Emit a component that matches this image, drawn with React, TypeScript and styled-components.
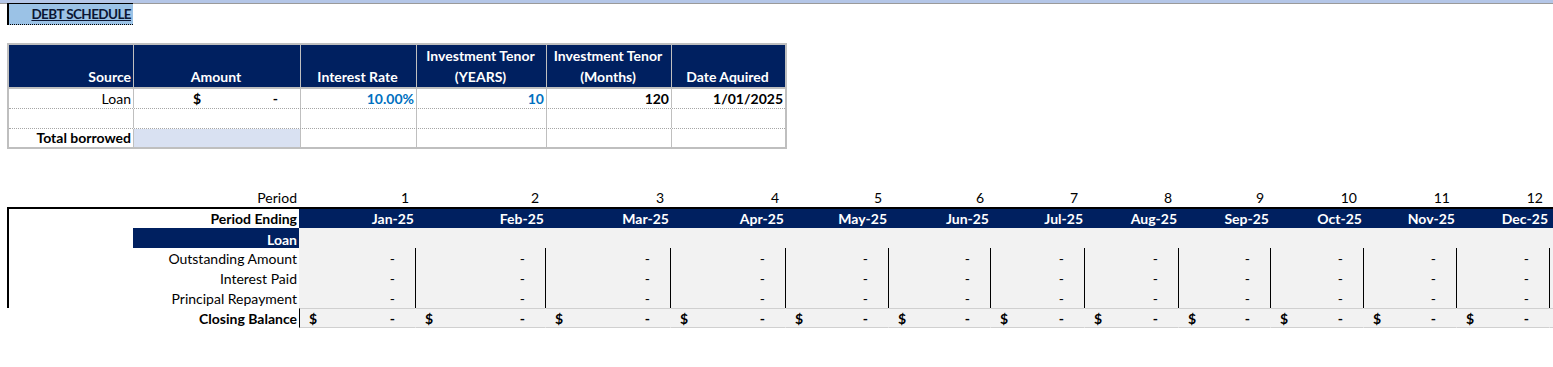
import React from 'react';
import styled, { createGlobalStyle, css } from 'styled-components';

const NAVY = '#002060';
const GRID_GRAY = '#bfbfbf';
const FILL_GRAY = '#f2f2f2';
const BLUE_TEXT = '#0070c0';

const GlobalStyle = createGlobalStyle`
  html, body { margin: 0; padding: 0; background: #ffffff; }
  body {
    font-family: Lato, "Open Sans", Arial, sans-serif;
    font-size: 14px;
    color: #000000;
  }
  * { box-sizing: border-box; }
`;

const Sheet = styled.div`
  width: 1553px;
  height: 367px;
  overflow: hidden;
  background: #ffffff;
`;

const TopBar = styled.div`
  height: 4px;
  background: #b4c6e7;
  border-bottom: 1px solid #9a9a9a;
`;

const TitleCell = styled.div`
  margin: -1px 0 0 7px;
  width: 126px;
  height: 22px;
  background: #9bc2e6;
  border-left: 2px solid #000;
  border-top: 1px solid #000;
  border-bottom: 1px dotted #000;
  display: flex;
  justify-content: flex-end;
  align-items: flex-end;
  padding: 0 2px 1px 0;
  line-height: 18px;
  font-size: 13.5px;
  letter-spacing: -0.6px;
  font-weight: 700;
  text-decoration: underline;
  color: #0b1633;
`;

/* ---------- Debt source table ---------- */

const SOURCE_COLS = '125px 167px 116px 130px 125px 113px';

const SourceTable = styled.div`
  margin: 18px 0 0 7px;
  width: 780px;
  border: 2px solid ${GRID_GRAY};
`;

const HeadRow = styled.div`
  display: grid;
  grid-template-columns: ${SOURCE_COLS};
  height: 44px;
  background: ${NAVY};
  border-bottom: 2px solid ${GRID_GRAY};
`;

const HeadCell = styled.div<{ $align: 'right' | 'center' }>`
  display: flex;
  flex-direction: column;
  justify-content: flex-end;
  align-items: ${(p) => (p.$align === 'right' ? 'flex-end' : 'center')};
  padding: 0 2px 1px 0;
  color: #ffffff;
  font-weight: 700;
  line-height: 21px;
  border-right: 1px solid ${GRID_GRAY};
  &:last-child { border-right: none; }
`;

const BodyRow = styled.div<{ $last?: boolean }>`
  display: grid;
  grid-template-columns: ${SOURCE_COLS};
  height: ${(p) => (p.$last ? '18px' : '20px')};
  border-bottom: ${(p) => (p.$last ? 'none' : `1px dotted #a6a6a6`)};
`;

const BodyCell = styled.div<{ $bold?: boolean; $blue?: boolean; $fill?: boolean }>`
  display: flex;
  justify-content: flex-end;
  align-items: flex-end;
  padding: 0 2px 1px 0;
  line-height: 17px;
  font-weight: ${(p) => (p.$bold ? 700 : 400)};
  color: ${(p) => (p.$blue ? BLUE_TEXT : '#000')};
  background: ${(p) => (p.$fill ? '#d9e1f2' : 'transparent')};
  border-right: 1px solid ${GRID_GRAY};
  &:last-child { border-right: none; }
`;

const MoneyCell = styled(BodyCell)`
  justify-content: space-between;
  padding: 0 22px 1px 59px;
`;

/* ---------- Monthly schedule ---------- */

const MONTH_WIDTHS = [116, 130, 125, 115, 103, 102, 94, 94, 92, 93, 93, 93];
const SCHEDULE_COLS = `293px ${MONTH_WIDTHS.map((w) => `${w}px`).join(' ')} 3px`;
const MONTHS = ['Jan-25', 'Feb-25', 'Mar-25', 'Apr-25', 'May-25', 'Jun-25', 'Jul-25', 'Aug-25', 'Sep-25', 'Oct-25', 'Nov-25', 'Dec-25'];

const Schedule = styled.div`
  margin: 38px 0 0 7px;
`;

const SRow = styled.div<{ $topRule?: boolean }>`
  display: grid;
  grid-template-columns: ${SCHEDULE_COLS};
  height: ${(p) => (p.$topRule ? '21px' : '20px')};
  ${(p) =>
    p.$topRule &&
    css`
      border-top: 2px solid #000;
    `}
`;

const Label = styled.div<{ $bold?: boolean; $edge?: boolean }>`
  display: flex;
  justify-content: flex-end;
  align-items: flex-end;
  padding: 0 3px 1px 0;
  line-height: 17px;
  font-weight: ${(p) => (p.$bold ? 700 : 400)};
  border-left: ${(p) => (p.$edge ? '2px solid #000' : '2px solid transparent')};
  color: #000;
`;

const LabelTag = styled.div`
  width: 167px;
  height: 20px;
  margin: 0 -3px -1px 0;
  padding: 3px 3px 0 0;
  background: ${NAVY};
  color: #ffffff;
  font-weight: 700;
  text-align: right;
  line-height: 17px;
`;

type Tone = 'plain' | 'navy' | 'gray';

const Cell = styled.div<{ $tone: Tone; $divider?: boolean; $ruled?: boolean; $lead?: boolean; $pad?: number; $bold?: boolean }>`
  display: flex;
  justify-content: flex-end;
  align-items: flex-end;
  padding: 0 ${(p) => p.$pad ?? 3}px 1px 0;
  line-height: 17px;
  white-space: nowrap;
  font-weight: ${(p) => (p.$bold ? 700 : 400)};
  background: ${(p) => (p.$tone === 'navy' ? NAVY : p.$tone === 'gray' ? FILL_GRAY : 'transparent')};
  color: ${(p) => (p.$tone === 'navy' ? '#ffffff' : '#000')};
  border-left: 1px solid ${(p) => (p.$divider ? '#000' : 'transparent')};
  margin-left: -1px;
  ${(p) =>
    p.$ruled &&
    css`
      border-top: 1px solid #d0d0d0;
      border-bottom: 1px solid #d0d0d0;
      padding-bottom: 0;
    `}
  ${(p) =>
    p.$lead &&
    css`
      justify-content: space-between;
      padding-left: 9px;
    `}
`;

const Dash = styled.span`
  display: inline-block;
`;

export default function App() {
  const dataRows = ['Outstanding Amount', 'Interest Paid', 'Principal Repayment'];
  return (
    <Sheet>
      <GlobalStyle />
      <TopBar />
      <TitleCell>DEBT SCHEDULE</TitleCell>

      <SourceTable>
        <HeadRow>
          <HeadCell $align="right"><span>Source</span></HeadCell>
          <HeadCell $align="center"><span>Amount</span></HeadCell>
          <HeadCell $align="center"><span>Interest Rate</span></HeadCell>
          <HeadCell $align="center"><span>Investment Tenor</span><span>(YEARS)</span></HeadCell>
          <HeadCell $align="center"><span>Investment Tenor</span><span>(Months)</span></HeadCell>
          <HeadCell $align="center"><span>Date Aquired</span></HeadCell>
        </HeadRow>
        <BodyRow>
          <BodyCell>Loan</BodyCell>
          <MoneyCell $bold><span>$</span><span>-</span></MoneyCell>
          <BodyCell $bold $blue>10.00%</BodyCell>
          <BodyCell $bold $blue>10</BodyCell>
          <BodyCell $bold>120</BodyCell>
          <BodyCell $bold>1/01/2025</BodyCell>
        </BodyRow>
        <BodyRow>
          <BodyCell />
          <BodyCell />
          <BodyCell />
          <BodyCell />
          <BodyCell />
          <BodyCell />
        </BodyRow>
        <BodyRow $last>
          <BodyCell $bold>Total borrowed</BodyCell>
          <BodyCell $fill />
          <BodyCell />
          <BodyCell />
          <BodyCell />
          <BodyCell />
        </BodyRow>
      </SourceTable>

      <Schedule>
        <SRow>
          <Label>Period</Label>
          {MONTHS.map((m, i) => (
            <Cell key={m} $tone="plain" $pad={7}>{i + 1}</Cell>
          ))}
          <Cell $tone="plain" />
        </SRow>
        <SRow $topRule>
          <Label $bold $edge>Period Ending</Label>
          {MONTHS.map((m) => (
            <Cell key={m} $tone="navy" $bold $pad={2}>{m}</Cell>
          ))}
          <Cell $tone="navy" />
        </SRow>
        <SRow>
          <Label $edge><LabelTag>Loan</LabelTag></Label>
          {MONTHS.map((m) => (
            <Cell key={m} $tone="gray" />
          ))}
          <Cell $tone="gray" />
        </SRow>
        {dataRows.map((r) => (
          <SRow key={r}>
            <Label $edge>{r}</Label>
            {MONTHS.map((m, i) => (
              <Cell key={m} $tone="gray" $divider={i > 0} $pad={21}><Dash>-</Dash></Cell>
            ))}
            <Cell $tone="gray" $divider />
          </SRow>
        ))}
        <SRow>
          <Label $bold>Closing Balance</Label>
          {MONTHS.map((m, i) => (
            <Cell key={m} $tone="gray" $ruled $lead $bold $divider={i === 0} $pad={21}>
              <span>$</span><Dash>-</Dash>
            </Cell>
          ))}
          <Cell $tone="gray" $ruled />
        </SRow>
      </Schedule>
    </Sheet>
  );
}
